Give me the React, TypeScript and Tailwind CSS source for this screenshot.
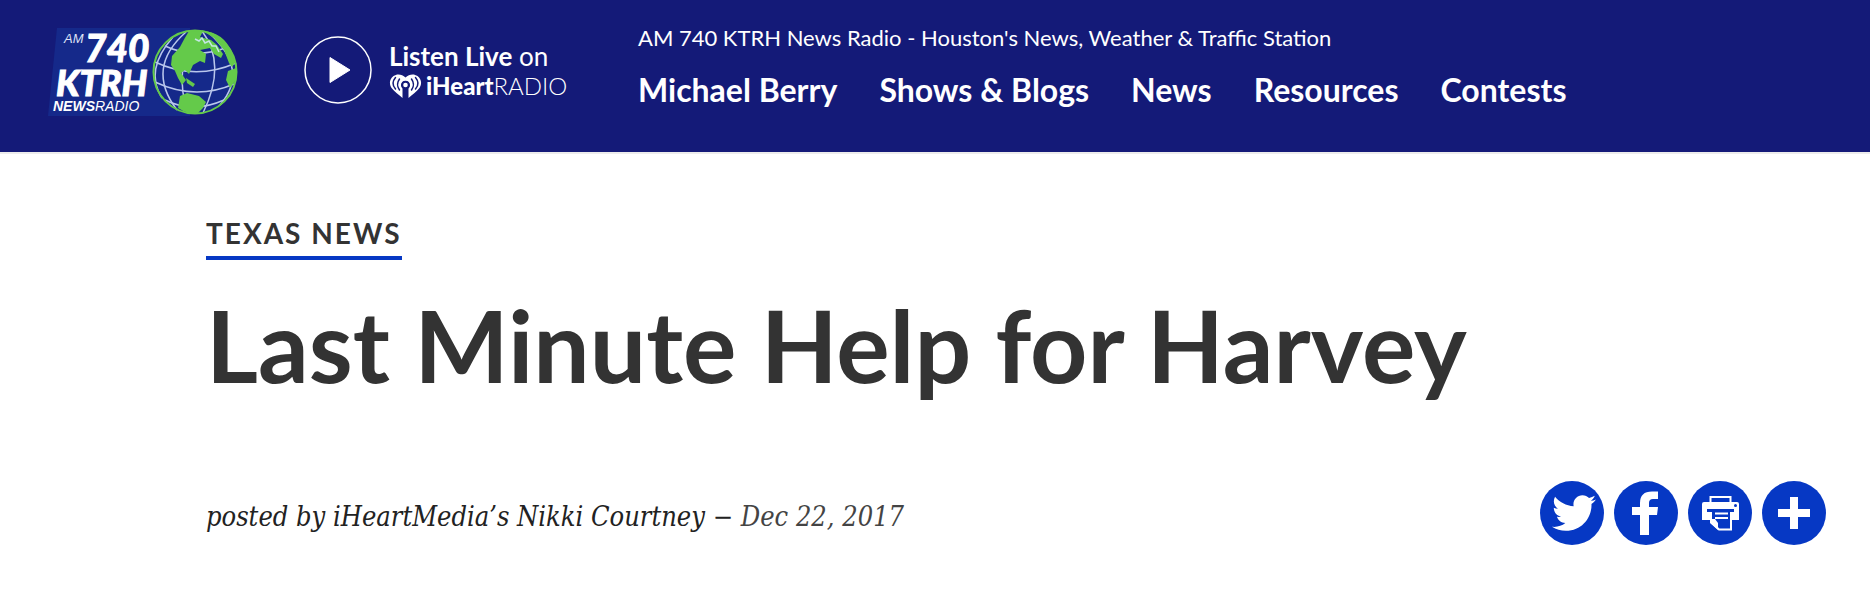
import { FaTwitter } from "react-icons/fa";

const navLinks = [
  { name: "Michael Berry", href: "#michael-berry" },
  { name: "Shows & Blogs", href: "#shows" },
  { name: "News", href: "#news" },
  { name: "Resources", href: "#resources" },
  { name: "Contests", href: "#contests" },
];

const StationLogo = () => (
  <svg
    viewBox="6 6 195 92"
    className="w-[195px] h-[92px] overflow-visible"
    role="img"
    aria-label="AM 740 KTRH News Radio"
    fontFamily="'Liberation Sans', Arial, sans-serif"
    fill="#fff"
  >
    <path d="M17 8H150V96H8z" fill="#15298a" />
    <text x="24" y="23" fontSize="13" fontStyle="italic" fill="#dfe2f5">
      AM
    </text>
    <g fontFamily="Lato, sans-serif" fontWeight="900" fontStyle="italic">
      <text x="45" y="42" fontSize="37" stroke="#fff">
        740
      </text>
      <text x="16" y="76" fontSize="36" stroke="#fff">
        KTRH
      </text>
    </g>
    <text x="13" y="91" fontSize="14">
      <tspan fontStyle="italic" fontWeight="700">
        NEWS
      </tspan>
      <tspan fontStyle="italic">RADIO</tspan>
    </text>
    {/* Globe */}
    <circle cx="155" cy="52" r="41.500" fill="#15298a" />
    <g fill="none" stroke="#b9c6ec" strokeWidth="1.500">
      <path d="M125 26Q155 40 188 27M115 42Q155 61 196 43M115 62Q155 81 194 64M125 80Q153 94 184 80" />
      <path d="M146 12Q105 48 137 90M156 11Q133 50 148 93M162 11Q187 44 163 93M169 13Q210 50 180 85" />
      <path d="M133 17Q104 50 122 78" />
    </g>
    <g fill="#64ca4a">
      <path d="M149 11Q144 19 140 27L132 36L131 45L135 51L138 58L142 65L146 60L141 53L145 50L149 54L153 45L160 41L165 43L166 34L160 30L170 28L174 34L181 38L183 34L177 25L171 20L160 17L163 11z" />
      <path d="M163 11Q183 12 192 32L195 43L192 47L189 43L184 30L174 18z" />
      <path d="M196 48L188 51L186 60L190 68L196 60z" />
      <path d="M146 58L155 64L153 67L147 63z" />
      <path d="M140 76L147 73L159 76L166 82L163 88L157 94Q147 94 138 88z" />
    </g>
    <path
      d="M155 19l4 2 3-3 3 5 4-2 3 5 4 0 3 6"
      fill="none"
      stroke="#c4e6e2"
      strokeWidth="1.500"
    />
    <circle
      cx="155"
      cy="52"
      r="41.500"
      fill="none"
      stroke="#64ca4a"
      strokeWidth="2"
    />
  </svg>
);

const HeartIcon = () => (
  <svg viewBox="0 0 33 24" className="w-[33px] h-6" aria-hidden="true">
    <path
      d="M16.500 3.500C13 0 8 -.5 4.500 2C0 5.500 0 10.500 3 14.500C5.500 17.500 9 20 13.500 24V14.500A4.500 4.500 0 1 1 19.500 14.500V24C24 20 27.500 17.500 30 14.500C33 10.500 33 5.500 28.500 2C25 -.5 20 0 16.500 3.500z"
      fill="#fff"
    />
    <circle cx="16.500" cy="11" r="4" fill="#141a78" />
    <circle cx="16.500" cy="11" r="2.300" fill="#fff" />
    <path
      d="M10.500 5Q6.500 10.500 10.500 16M6.500 3.500Q1.500 9.500 6.500 15M22.500 5Q26.500 10.500 22.500 16M26.500 3.500Q31.500 9.500 26.500 15"
      fill="none"
      stroke="#141a78"
      strokeWidth="1.500"
      strokeLinecap="round"
    />
  </svg>
);

const FacebookIcon = () => (
  <svg viewBox="0 0 64 64" className="size-16" aria-hidden="true">
    <path
      d="M44 10.500H38Q26 10.500 26 22V26H18V34H26V54H35V34H43L44 26H35V22Q35 18 39 18H44z"
      fill="#fff"
    />
  </svg>
);

const PrintIcon = () => (
  <svg viewBox="0 0 64 64" className="size-16" aria-hidden="true">
    <path
      d="M22.500 22V16H42.500V22"
      fill="none"
      stroke="#fff"
      strokeWidth="2"
    />
    <path d="M16 21H49Q51 21 51 23V39H14V23Q14 21 16 21z" fill="#fff" />
    <circle cx="47.500" cy="24.500" r="1.500" fill="#0638c4" />
    <path d="M19 28H46V31H44V39H22V31H19z" fill="#0638c4" />
    <path
      d="M23 31V41L31 48.500H43V31"
      fill="none"
      stroke="#fff"
      strokeWidth="2"
    />
    <path d="M22 38V42L30 49V42L27 38z" fill="#fff" />
    <path d="M27 32.500H40M27 37H40" stroke="#fff" strokeWidth="2" />
  </svg>
);

const PlusIcon = () => (
  <svg viewBox="0 0 64 64" className="size-16" aria-hidden="true">
    <path d="M32 16V48M16 32H48" stroke="#fff" strokeWidth="8" />
  </svg>
);

const shareButtons = [
  { label: "Share on Twitter", icon: <FaTwitter className="ml-1 size-11" /> },
  { label: "Share on Facebook", icon: <FacebookIcon /> },
  { label: "Print", icon: <PrintIcon /> },
  { label: "More sharing options", icon: <PlusIcon /> },
];

const Header = () => (
  <header className="flex items-start bg-[#141a78] border-b-2 border-[#ececec] pb-[34px] pl-[46px] text-white">
    <a href="#home" className="mt-[26px] shrink-0">
      <StationLogo />
    </a>
    {/* Listen Live */}
    <a
      href="#listen"
      className="mt-9 ml-[63px] flex w-[334px] shrink-0 items-center whitespace-nowrap"
    >
      <svg viewBox="0 0 68 68" className="size-[68px]" aria-hidden="true">
        <circle
          cx="34"
          cy="34"
          r="33"
          fill="none"
          stroke="#fff"
          strokeWidth="1.500"
        />
        <path
          d="M26 21.500L46 34L26 46.500z"
          fill="#fff"
          stroke="#fff"
          strokeLinejoin="round"
        />
      </svg>
      <div className="ml-[17px]">
        <div className="text-[26px] leading-8">
          <span className="font-bold">Listen Live</span> on
        </div>
        <div className="flex items-center">
          <HeartIcon />
          <span className="ml-1 text-2xl leading-7">
            <span className="font-black">iHeart</span>
            <span className="font-light">RADIO</span>
          </span>
        </div>
      </div>
    </a>
    <div className="mt-6">
      <p className="text-[22px] leading-7">
        AM 740 KTRH News Radio - Houston's News, Weather &amp; Traffic Station
      </p>
      <nav className="mt-[18px] flex gap-[42px]">
        {navLinks.map(({ name, href }) => (
          <a
            href={href}
            key={name}
            className="text-[32px] leading-10 font-bold whitespace-nowrap"
          >
            {name}
          </a>
        ))}
      </nav>
    </div>
  </header>
);

const App = () => {
  return (
    <div className="min-h-screen bg-white font-['Lato',sans-serif] text-[#333]">
      <Header />
      <main className="pt-16 pr-11 pl-[206px]">
        <a
          href="#texas-news"
          className="inline-block border-b-4 border-[#0638c4] pb-2 text-[28px] leading-[30px] font-bold tracking-[2px] uppercase"
        >
          Texas News
        </a>
        <h1 className="mt-6 text-[100px] leading-[120px] font-bold">
          Last Minute Help for Harvey
        </h1>
        <div className="mt-[77px] flex items-center justify-between">
          <p className="pt-2 font-['DejaVu_Serif_Condensed','DejaVu_Serif',serif] text-[27px] leading-9 text-[#222] italic">
            posted by iHeartMedia’s Nikki Courtney −{" "}
            <span className="text-[#444]">Dec 22, 2017</span>
          </p>
          <div className="flex gap-2.5">
            {shareButtons.map(({ label, icon }) => (
              <button
                key={label}
                aria-label={label}
                className="flex size-16 items-center justify-center rounded-full bg-[#0638c4] text-white"
              >
                {icon}
              </button>
            ))}
          </div>
        </div>
      </main>
    </div>
  );
};

export default App;
